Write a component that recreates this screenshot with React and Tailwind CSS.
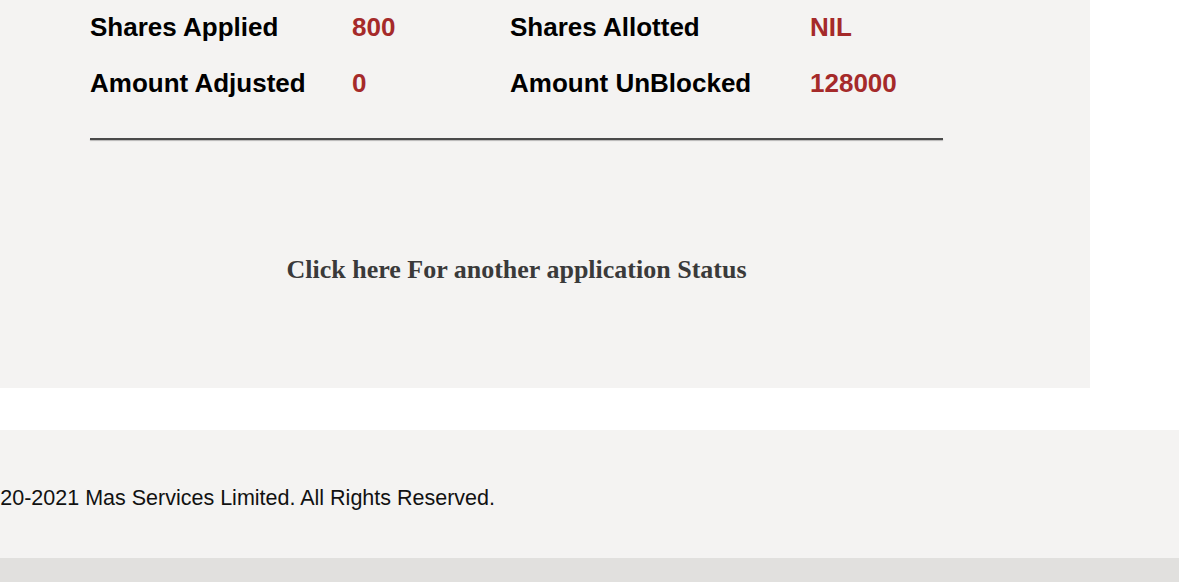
import React from 'react';

const rows = [
  ['Shares Applied', '800', 'Shares Allotted', 'NIL'],
  ['Amount Adjusted', '0', 'Amount UnBlocked', '128000'],
];

function StatusPanel() {
  return (
    <div className="w-[1090px] h-[388px] bg-[#f4f3f2] pl-[90px] pt-[12px]">
      <div className="w-[853px]">
        <div className="flex flex-col gap-[26px] font-['Liberation_Sans',Arial,sans-serif] font-bold text-[26px] leading-[30px]">
          {rows.map((r) => (
            <div key={r[0]} className="grid grid-cols-[262px_158px_300px_1fr]">
              <span className="text-black">{r[0]}</span>
              <span className="text-[#a52a2a]">{r[1]}</span>
              <span className="text-black">{r[2]}</span>
              <span className="text-[#a52a2a]">{r[3]}</span>
            </div>
          ))}
        </div>
        <div className="mt-[40px] h-[2px] bg-[#4a4a4a] shadow-[0_1px_1px_rgba(0,0,0,0.25)]" />
        <div className="mt-[115px] text-center font-['Liberation_Serif','Times_New_Roman',serif] font-bold text-[26px] leading-[30px] text-[#3a3a3a]">
          <a href="#" className="text-[#3a3a3a]">Click here For another application Status</a>
        </div>
      </div>
    </div>
  );
}

function Footer() {
  return (
    <div className="mt-[42px] h-[128px] bg-[#f4f3f2] flex items-center">
      <div className="w-[495px] flex justify-end overflow-hidden">
        <p className="whitespace-nowrap font-['Liberation_Sans',Arial,sans-serif] text-[21.5px] text-[#111] pt-[8px]">
          © 2020-2021 Mas Services Limited. All Rights Reserved.
        </p>
      </div>
    </div>
  );
}

export default function App() {
  return (
    <div className="w-[1179px] h-[582px] bg-white overflow-hidden flex flex-col">
      <StatusPanel />
      <Footer />
      <div className="flex-1 bg-[#e1e0de]" />
    </div>
  );
}
